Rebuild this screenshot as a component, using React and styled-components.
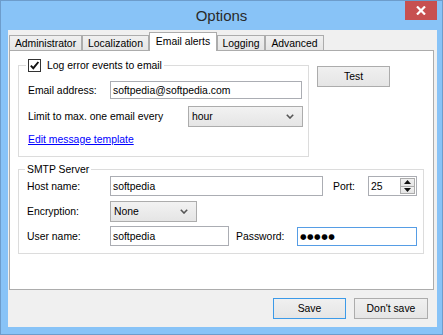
import React from "react";
import styled, { createGlobalStyle } from "styled-components";

const Global = createGlobalStyle`
  html, body { margin: 0; padding: 0; background: #ffffff; }
  body {
    font-family: "Liberation Sans", Arial, sans-serif;
    font-size: 10.4px;
    color: #000;
  }
  * { box-sizing: border-box; }
`;

const Window = styled.div`
  width: 443px;
  height: 335px;
  background: #88c3f7;
  border: 1px solid #6d9ccb;
  display: flex;
  flex-direction: column;
`;

const TitleBar = styled.div`
  height: 29px;
  display: grid;
  grid-template-columns: 1fr auto 1fr;
  align-items: start;
`;

const Title = styled.div`
  grid-column: 2;
  font-size: 15px;
  line-height: 29px;
  color: #2a2a2a;
`;

const CloseButton = styled.div`
  grid-column: 3;
  justify-self: end;
  margin-right: 5px;
  width: 32px;
  height: 19px;
  background: #c75050;
  display: flex;
  align-items: center;
  justify-content: center;
`;

const Client = styled.div`
  flex: 1;
  margin: 0 5px 7px 7px;
  background: #f0f0f0;
  padding: 2px 0 0 1px;
  display: flex;
  flex-direction: column;
`;

const TabStrip = styled.div`
  height: 18px;
  display: flex;
  align-items: flex-end;
`;

const Tab = styled.div`
  width: ${(p) => p.$w}px;
  height: ${(p) => (p.$active ? 19 : 15)}px;
  margin-bottom: ${(p) => (p.$active ? -1 : 0)}px;
  position: relative;
  z-index: ${(p) => (p.$active ? 1 : 0)};
  border: 1px solid #acacac;
  border-bottom: none;
  background: ${(p) =>
    p.$active ? "#ffffff" : "linear-gradient(#f0f0f0, #e5e5e5)"};
  display: flex;
  align-items: ${(p) => (p.$active ? "flex-start" : "center")};
  padding-top: ${(p) => (p.$active ? 2 : 0)}px;
  justify-content: center;
  white-space: nowrap;
  line-height: 13px;
`;

const Panel = styled.div`
  width: 425px;
  height: 240px;
  background: #ffffff;
  border: 1px solid #acacac;
  padding: 14px 0 0 8px;
`;

const TopRow = styled.div`
  display: flex;
  align-items: flex-start;
  gap: 8px;
`;

const GroupBox = styled.div`
  position: relative;
  width: ${(p) => p.$w}px;
  border: 1px solid #dcdcdc;
  padding: ${(p) => p.$pad};
  margin-top: ${(p) => p.$mt || 0}px;
  display: flex;
  flex-direction: column;
  gap: 5px;
`;

const Legend = styled.div`
  position: absolute;
  top: -8px;
  left: ${(p) => p.$left}px;
  height: 14px;
  padding: 0 2px;
  background: #ffffff;
  display: flex;
  align-items: center;
  gap: 6px;
  white-space: nowrap;
`;

const CheckBox = styled.div`
  width: 13px;
  height: 13px;
  border: 1px solid #333333;
  background: #ffffff;
  display: flex;
  align-items: center;
  justify-content: center;
`;

const Row = styled.div`
  height: ${(p) => p.$h}px;
  margin-top: ${(p) => p.$mt || 0}px;
  display: flex;
  align-items: center;
`;

const Label = styled.span`
  width: ${(p) => (p.$w ? `${p.$w}px` : "auto")};
  flex: none;
  white-space: nowrap;
`;

const TextBox = styled.input`
  width: ${(p) => p.$w}px;
  height: ${(p) => p.$h || 20}px;
  margin-left: ${(p) => p.$ml || 0}px;
  border: 1px solid ${(p) => (p.$focused ? "#569de5" : "#abadb3")};
  background: #ffffff;
  font: inherit;
  color: #000;
  padding: 0 2px;
  outline: none;
`;

const DotsBox = styled(TextBox)`
  font-family: "DejaVu Sans", sans-serif;
  font-size: 7.5px;
  letter-spacing: 0.5px;
`;

const SelectBox = styled.div`
  width: ${(p) => p.$w}px;
  height: 21px;
  margin-left: ${(p) => (p.$auto ? "auto" : "0")};
  border: 1px solid #acacac;
  background: linear-gradient(#f2f2f2, #e5e5e5);
  display: flex;
  align-items: center;
  justify-content: space-between;
  padding: 0 8px 0 3px;
`;

const Link = styled.a`
  color: #0000ff;
  text-decoration: underline;
  cursor: pointer;
`;

const PushButton = styled.button`
  width: ${(p) => p.$w}px;
  height: 21px;
  margin-top: ${(p) => p.$mt || 0}px;
  border: 1px solid ${(p) => (p.$default ? "#3c9ae8" : "#acacac")};
  background: linear-gradient(#f0f0f0, #e5e5e5);
  font: inherit;
  color: #000;
  padding: 0;
  flex: none;
`;

const SpinField = styled.div`
  width: 49px;
  height: 20px;
  border: 1px solid #abadb3;
  background: #ffffff;
  display: flex;
  align-items: center;
  justify-content: space-between;
  padding: 1px 1px 1px 2px;
`;

const SpinButtons = styled.div`
  width: 15px;
  height: 100%;
  display: flex;
  flex-direction: column;
  border: 1px solid #acacac;
`;

const SpinHalf = styled.div`
  flex: 1;
  background: linear-gradient(#f0f0f0, #e5e5e5);
  display: flex;
  align-items: center;
  justify-content: center;
  & + & { border-top: 1px solid #acacac; }
`;

const Footer = styled.div`
  display: flex;
  justify-content: flex-end;
  gap: 8px;
  padding: 8px 9px 0 0;
`;

const Chevron = () => (
  <svg width="8" height="5" viewBox="0 0 8 5">
    <path d="M0.8 0.8 L4 4 L7.2 0.8" fill="none" stroke="#555" strokeWidth="1.6" />
  </svg>
);

const tabs = [
  { label: "Administrator", w: 73 },
  { label: "Localization", w: 67 },
  { label: "Email alerts", w: 68, active: true },
  { label: "Logging", w: 48 },
  { label: "Advanced", w: 59 },
];

export default function App() {
  return (
    <>
      <Global />
      <Window>
        <TitleBar>
          <Title>Options</Title>
          <CloseButton>
            <svg width="10" height="9" viewBox="0 0 10 9">
              <path d="M1 0.5 L9 8.5 M9 0.5 L1 8.5" stroke="#fff" strokeWidth="2.2" />
            </svg>
          </CloseButton>
        </TitleBar>
        <Client>
          <TabStrip>
            {tabs.map((t) => (
              <Tab key={t.label} $w={t.w} $active={t.active}>
                {t.label}
              </Tab>
            ))}
          </TabStrip>
          <Panel>
            <TopRow>
              <GroupBox $w={291} $pad="15px 5px 10px 9px">
                <Legend $left={7}>
                  <CheckBox>
                    <svg width="11" height="11" viewBox="0 0 11 11">
                      <path d="M1.8 5.6 L4.3 8.2 L9.4 2" fill="none" stroke="#111" strokeWidth="1.9" />
                    </svg>
                  </CheckBox>
                  Log error events to email
                </Legend>
                <Row $h={18}>
                  <Label $w={82}>Email address:</Label>
                  <TextBox $w={192} $h={18} readOnly value="softpedia@softpedia.com" />
                </Row>
                <Row $h={21} $mt={2}>
                  <Label>Limit to max. one email every</Label>
                  <SelectBox $w={115} $auto>
                    <span>hour</span>
                    <Chevron />
                  </SelectBox>
                </Row>
                <Row $h={14}>
                  <Link>Edit message template</Link>
                </Row>
              </GroupBox>
              <PushButton $w={73} $mt={1}>Test</PushButton>
            </TopRow>
            <GroupBox $w={406} $pad="6px 5px 7px 8px" $mt={12}>
              <Legend $left={6}>SMTP Server</Legend>
              <Row $h={20}>
                <Label $w={83}>Host name:</Label>
                <TextBox $w={213} readOnly value="softpedia" />
                <Label $w={35} style={{ marginLeft: 10 }}>Port:</Label>
                <SpinField>
                  <span>25</span>
                  <SpinButtons>
                    <SpinHalf>
                      <svg width="7" height="4" viewBox="0 0 7 4"><path d="M0 4 L3.5 0 L7 4 Z" fill="#111" /></svg>
                    </SpinHalf>
                    <SpinHalf>
                      <svg width="7" height="4" viewBox="0 0 7 4"><path d="M0 0 L3.5 4 L7 0 Z" fill="#111" /></svg>
                    </SpinHalf>
                  </SpinButtons>
                </SpinField>
              </Row>
              <Row $h={20}>
                <Label $w={83}>Encryption:</Label>
                <SelectBox $w={87}>
                  <span>None</span>
                  <Chevron />
                </SelectBox>
              </Row>
              <Row $h={20}>
                <Label $w={83}>User name:</Label>
                <TextBox $w={119} readOnly value="softpedia" />
                <Label $w={61} style={{ marginLeft: 7 }}>Password:</Label>
                <DotsBox $w={120} $h={19} $focused readOnly value="●●●●●" />
              </Row>
            </GroupBox>
          </Panel>
          <Footer>
            <PushButton $w={73} $default>Save</PushButton>
            <PushButton $w={74}>Don't save</PushButton>
          </Footer>
        </Client>
      </Window>
    </>
  );
}
